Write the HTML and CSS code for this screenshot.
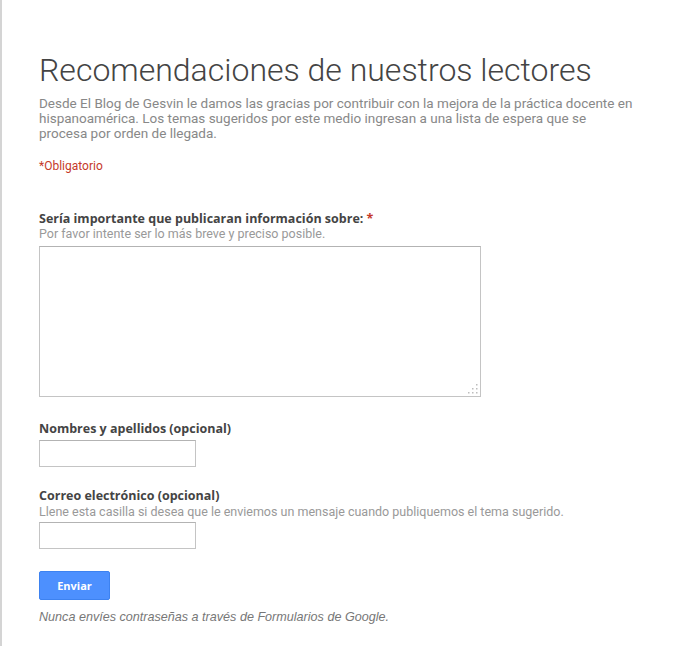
FILE: index.html
```html
<!DOCTYPE html>
<html lang="es">
<head>
<meta charset="utf-8">
<title>Recomendaciones de nuestros lectores</title>
<link rel="stylesheet" href="styles.css">
</head>
<body>
<div class="page">
  <div class="form">
    <h1 class="title">Recomendaciones de nuestros lectores</h1>
    <p class="desc">Desde El Blog de Gesvin le damos las gracias por contribuir con la mejora de la práctica docente en hispanoamérica. Los temas sugeridos por este medio ingresan a una lista de espera que se<br>procesa por orden de llegada.</p>
    <p class="required">*Obligatorio</p>

    <div class="item item-first">
      <label class="label">Sería importante que publicaran información sobre: <span class="star">*</span></label>
      <div class="help">Por favor intente ser lo más breve y preciso posible.</div>
      <div class="area-wrap">
        <textarea class="area"></textarea>
        <svg class="grip" width="10" height="10" viewBox="0 0 10 10" aria-hidden="true">
          <g fill="#bdbdbd">
            <rect x="8" y="0" width="1.5" height="1.5"/>
            <rect x="8" y="4" width="1.5" height="1.5"/>
            <rect x="4" y="4" width="1.5" height="1.5"/>
            <rect x="8" y="8" width="1.5" height="1.5"/>
            <rect x="4" y="8" width="1.5" height="1.5"/>
            <rect x="0" y="8" width="1.5" height="1.5"/>
          </g>
        </svg>
      </div>
    </div>

    <div class="item item-name">
      <label class="label">Nombres y apellidos (opcional)</label>
      <input class="field" type="text">
    </div>

    <div class="item item-mail">
      <label class="label">Correo electrónico (opcional)</label>
      <div class="help help-mail">Llene esta casilla si desea que le enviemos un mensaje cuando publiquemos el tema sugerido.</div>
      <input class="field" type="text">
    </div>

    <button class="submit" type="button">Enviar</button>
    <p class="note">Nunca envíes contraseñas a través de Formularios de Google.</p>
  </div>
</div>
</body>
</html>
```

FILE: styles.css
```css
html, body {
  margin: 0;
  padding: 0;
  background: #fff;
}
.page {
  min-height: 646px;
  border-left: 2px solid #d4d4d4;
  box-sizing: border-box;
  padding: 50px 0 0 37px;
}
.form {
  width: 620px;
}
.title {
  margin: 0;
  font-family: Roboto, "Liberation Sans", sans-serif;
  font-weight: 300;
  font-size: 32px;
  line-height: 40px;
  color: #444;
}
.desc {
  margin: 6px 0 0;
  font-family: Roboto, "Liberation Sans", sans-serif;
  font-size: 13.5px;
  line-height: 15px;
  color: #888;
}
.required {
  margin: 18px 0 0;
  font-family: Roboto, "Liberation Sans", sans-serif;
  font-size: 12px;
  line-height: 14px;
  color: #c53929;
}
.item {
  display: flex;
  flex-direction: column;
  align-items: flex-start;
}
.item-first {
  margin-top: 38px;
}
.item-name {
  margin-top: 24px;
}
.item-mail {
  margin-top: 21px;
}
.label {
  font-family: "Open Sans", "Liberation Sans", sans-serif;
  font-weight: 700;
  font-size: 12.5px;
  line-height: 16px;
  color: #444;
}
.star {
  color: #c53929;
}
.help {
  font-family: Roboto, "Liberation Sans", sans-serif;
  font-size: 12.5px;
  line-height: 14px;
  color: #999;
}
.help-mail {
  margin-top: 1px;
}
.area-wrap {
  position: relative;
  margin-top: 5px;
}
.area {
  display: block;
  width: 442px;
  height: 151px;
  box-sizing: border-box;
  border: 1px solid #c4c4c4;
  border-top-color: #b3b3b3;
  border-radius: 0;
  padding: 4px;
  resize: none;
}
.grip {
  position: absolute;
  right: 3px;
  bottom: 3px;
}
.field {
  margin-top: 3px;
  width: 157px;
  height: 27px;
  box-sizing: border-box;
  border: 1px solid #c4c4c4;
  border-top-color: #b3b3b3;
  border-radius: 0;
  padding: 2px 4px;
}
.submit {
  display: block;
  margin-top: 22px;
  width: 71px;
  height: 29px;
  border: 1px solid #3d82f0;
  border-radius: 2px;
  background: #4d90fe;
  color: #fff;
  font-family: "Open Sans", "Liberation Sans", sans-serif;
  font-weight: 700;
  font-size: 11px;
  padding: 0;
}
.note {
  margin: 10px 0 0;
  font-family: "Liberation Sans", Arial, sans-serif;
  font-style: italic;
  font-size: 12.6px;
  line-height: 14px;
  color: #777;
}
```
